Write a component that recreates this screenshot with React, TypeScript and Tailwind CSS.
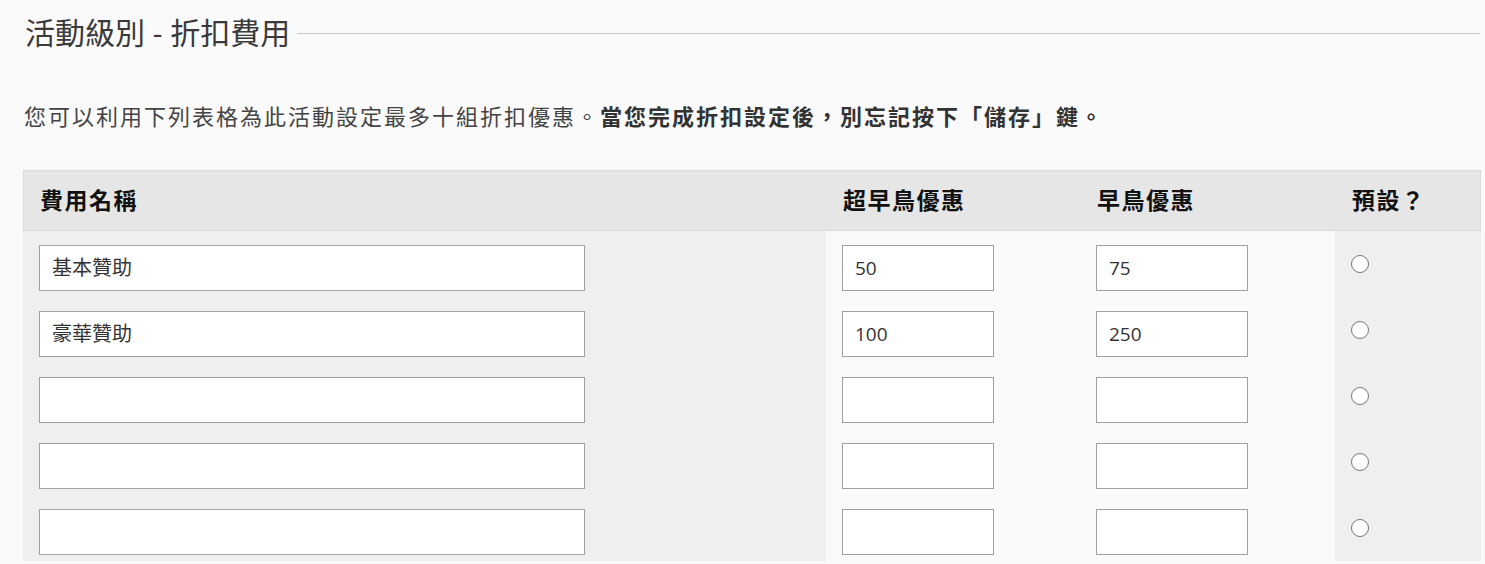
import React from "react";

const rows = [
  { name: "基本贊助", a: "50", b: "75" },
  { name: "豪華贊助", a: "100", b: "250" },
  { name: "", a: "", b: "" },
  { name: "", a: "", b: "" },
  { name: "", a: "", b: "" },
];

const font = { fontFamily: '"Open Sans", "Noto Sans CJK TC", sans-serif' };

export default function App() {
  return (
    <div className="min-h-[564px] w-[1485px] bg-[#fafafa] overflow-hidden" style={font}>
      <div className="pl-[25px] pr-[5px] pt-[13px] flex items-center">
        <h2 className="text-[30px] leading-[40px] text-[#3a3a3a] font-normal whitespace-nowrap">活動級別 - 折扣費用</h2>
        <div className="flex-1 h-px bg-[#c9c9c2] ml-[7px] mt-[1px]" />
      </div>
      <p className="pl-[24px] mt-[48px] text-[22px] leading-[30px] text-[#444] tracking-[2px] whitespace-nowrap">
        您可以利用下列表格為此活動設定最多十組折扣優惠。<b className="font-bold text-[#333]">當您完成折扣設定後，別忘記按下「儲存」鍵。</b>
      </p>
      <div className="ml-[23px] mt-[39px] w-[1458px]">
        <div className="grid grid-cols-[803px_254px_255px_146px] h-[61px] bg-[#e6e6e6] border border-[#dadada] items-center text-[23px] font-bold text-[#111]">
          <div className="pl-[16px] tracking-[1.5px]">費用名稱</div>
          <div className="pl-[16px] tracking-[1.5px]">超早鳥優惠</div>
          <div className="pl-[16px] tracking-[1.5px]">早鳥優惠</div>
          <div className="pl-[16px] tracking-[1.5px]">預設？</div>
        </div>
        {rows.map((r, i) => (
          <div key={i} className="grid grid-cols-[803px_254px_255px_146px] h-[66px]">
            <div className="bg-[#efefef] pl-[16px] pt-[14px]">
              <div className="w-[546px] h-[46px] bg-white border border-[#a0a0a0] flex items-center pl-[12px] text-[20px] text-[#333]">{r.name}</div>
            </div>
            <div className="bg-[#fafafa] pl-[16px] pt-[14px]">
              <div className="w-[152px] h-[46px] bg-white border border-[#a0a0a0] flex items-center pl-[12px] text-[19px] text-[#333]">{r.a}</div>
            </div>
            <div className="bg-[#fafafa] pl-[16px] pt-[14px]">
              <div className="w-[152px] h-[46px] bg-white border border-[#a0a0a0] flex items-center pl-[12px] text-[19px] text-[#333]">{r.b}</div>
            </div>
            <div className="bg-[#efefef] pl-[16px] pt-[24px]">
              <div className="w-[18px] h-[18px] rounded-full border-[1.5px] border-[#777] bg-white" />
            </div>
          </div>
        ))}
      </div>
    </div>
  );
}
